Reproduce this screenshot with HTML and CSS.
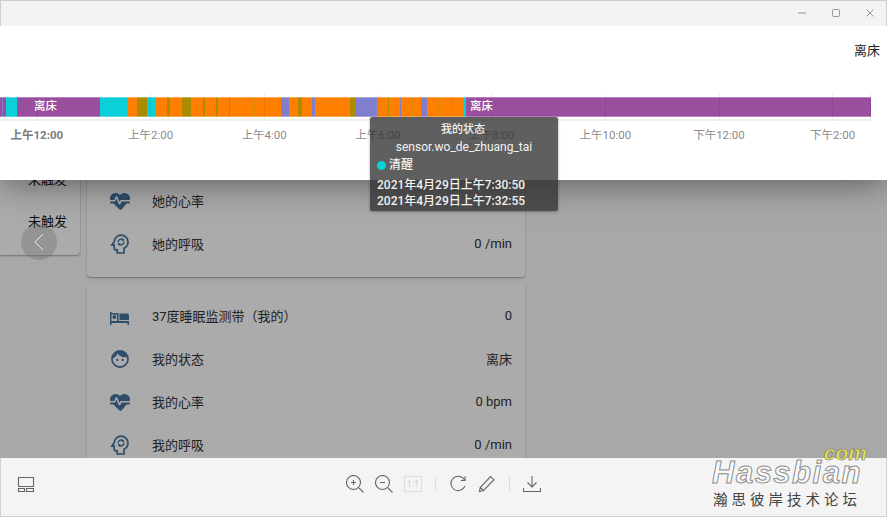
FILE: index.html
```html
<!DOCTYPE html>
<html lang="zh">
<head>
<meta charset="utf-8">
<title>我的状态</title>
<link rel="stylesheet" href="styles.css">
</head>
<body>
<svg class="defs" width="0" height="0">
  <defs>
    <symbol id="i-heart" viewBox="0 0 24 24"><path d="M7.5,4A5.5,5.5 0 0,0 2,9.5C2,10 2.09,10.5 2.22,11H6.3L7.57,7.63C7.87,6.83 9.05,6.75 9.43,7.63L11.5,13L12.09,11.58C12.22,11.25 12.57,11 13,11H21.78C21.91,10.5 22,10 22,9.5A5.5,5.5 0 0,0 16.5,4C14.64,4 13,4.84 12,6.25C11,4.84 9.36,4 7.5,4M3,12.5A1,1 0 0,0 2,13.5A1,1 0 0,0 3,14.5H5.44L11,20C12.5,21.47 12.5,21.47 14,20L18.56,14.5H21A1,1 0 0,0 22,13.5A1,1 0 0,0 21,12.5H13.4L12.47,14.8C12.07,15.81 10.92,15.67 10.55,14.83L8.5,9.5L7.54,11.83C7.39,12.22 7.05,12.5 6.6,12.5H3Z"/></symbol>
    <symbol id="i-head" viewBox="0 0 24 24"><path class="ln" d="M13 3.2C9.4 3.2 6.4 6 6.2 9.7L3.800 13.200H6.200V16C6.200 17 7 17.800 8 17.800H9.200V21H16V16.300C18.300 15.200 20 12.800 20 10C20 6.200 16.900 3.200 13 3.200Z"/><path class="ln thin" d="M10 10.200A3.200 3.200 0 0 1 15.200 7.800M16 9.800A3.200 3.200 0 0 1 10.800 12.200"/><path d="M15.900 6.200V9H13.200ZM10.100 13.800V11H12.800Z"/></symbol>
    <symbol id="i-bed" viewBox="0 0 24 24"><path d="M2 8H3.500V9H10.500V17H21V21H19.500V19H3.500V21H2ZM3.500 10.500V17H9V10.500ZM11.500 9.500H19C20.100 9.500 21 10.400 21 11.500V16H11.500Z"/><circle cx="6.300" cy="13" r="1.900"/></symbol>
    <symbol id="i-face" viewBox="-1.500 -1.500 27 27"><path d="M9,11.75A1.25,1.25 0 0,0 7.75,13A1.25,1.25 0 0,0 9,14.25A1.25,1.25 0 0,0 10.25,13A1.25,1.25 0 0,0 9,11.75M15,11.75A1.25,1.25 0 0,0 13.75,13A1.25,1.25 0 0,0 15,14.25A1.25,1.25 0 0,0 16.25,13A1.25,1.25 0 0,0 15,11.75M12,2A10,10 0 0,0 2,12A10,10 0 0,0 12,22A10,10 0 0,0 22,12A10,10 0 0,0 12,2M12,20C7.59,20 4,16.41 4,12C4,11.71 4,11.42 4.05,11.14C6.41,10.09 8.28,8.16 9.26,5.77C11.07,8.33 14.05,10 17.42,10C18.2,10 18.95,9.91 19.67,9.74C19.88,10.45 20,11.21 20,12C20,16.41 16.41,20 12,20Z"/></symbol>
  </defs>
</svg>

<div class="page">
  <aside class="col-left">
    <section class="card card-left">
      <div class="status-row">未触发</div>
      <div class="status-row">未触发</div>
      <div class="status-row">未触发</div>
    </section>
  </aside>
  <main class="col-main">
    <section class="card card-sensors">
      <div class="row"><svg class="icon"><use href="#i-bed"/></svg><span class="name">37度睡眠监测带（她的）</span><span class="val">0</span></div>
      <div class="row"><svg class="icon"><use href="#i-face"/></svg><span class="name">她的状态</span><span class="val">离床</span></div>
      <div class="row"><svg class="icon"><use href="#i-heart"/></svg><span class="name">她的心率</span><span class="val"></span></div>
      <div class="row"><svg class="icon"><use href="#i-head"/></svg><span class="name">她的呼吸</span><span class="val">0 /min</span></div>
    </section>
    <section class="card card-sensors">
      <div class="row"><svg class="icon"><use href="#i-bed"/></svg><span class="name">37度睡眠监测带（我的）</span><span class="val">0</span></div>
      <div class="row"><svg class="icon"><use href="#i-face"/></svg><span class="name">我的状态</span><span class="val">离床</span></div>
      <div class="row"><svg class="icon"><use href="#i-heart"/></svg><span class="name">我的心率</span><span class="val">0 bpm</span></div>
      <div class="row"><svg class="icon"><use href="#i-head"/></svg><span class="name">我的呼吸</span><span class="val">0 /min</span></div>
    </section>
  </main>
</div>

<div class="scrim"></div>

<button class="nav-prev" aria-label="上一张">
  <svg width="10" height="18" viewBox="0 0 10 18"><path d="M9 1L1 9L9 17"/></svg>
</button>

<section class="viewer">
  <header class="titlebar">
    <svg class="win" viewBox="0 0 10 10"><path d="M1 5H9"/></svg>
    <svg class="win" viewBox="0 0 10 10"><rect x="1.500" y="1.500" width="7" height="7" rx="1.200"/></svg>
    <svg class="win" viewBox="0 0 10 10"><path d="M1.500 1.500L8.500 8.500M8.500 1.500L1.500 8.500"/></svg>
  </header>
  <div class="state-now">离床</div>
  <div class="chart">
    <div class="bar">
      <span class="seg p" style="width:2px"></span>
      <span class="seg b" style="width:1px"></span>
      <span class="seg p" style="width:3px"></span>
      <span class="seg c" style="width:11px"></span>
      <span class="seg p label-a" style="width:83px">离床</span>
      <span class="seg c" style="width:28px"></span>
      <span class="seg o" style="width:9px"></span>
      <span class="seg y" style="width:10px"></span>
      <span class="seg c" style="width:9px"></span>
      <span class="seg o" style="width:11px"></span>
      <span class="seg y" style="width:3px"></span>
      <span class="seg o" style="width:12px"></span>
      <span class="seg y" style="width:9px"></span>
      <span class="seg o" style="width:12px"></span>
      <span class="seg y" style="width:2px"></span>
      <span class="seg o" style="width:11px"></span>
      <span class="seg y" style="width:2px"></span>
      <span class="seg o" style="width:11px"></span>
      <span class="seg y" style="width:1px"></span>
      <span class="seg o" style="width:24px"></span>
      <span class="seg t" style="width:1px"></span>
      <span class="seg o" style="width:14px"></span>
      <span class="seg t" style="width:1px"></span>
      <span class="seg o" style="width:11px"></span>
      <span class="seg b" style="width:8px"></span>
      <span class="seg o" style="width:9px"></span>
      <span class="seg y" style="width:4px"></span>
      <span class="seg o" style="width:10px"></span>
      <span class="seg b" style="width:3px"></span>
      <span class="seg o" style="width:35px"></span>
      <span class="seg y" style="width:6px"></span>
      <span class="seg b" style="width:21px"></span>
      <span class="seg o" style="width:11px"></span>
      <span class="seg y" style="width:1px"></span>
      <span class="seg o" style="width:11px"></span>
      <span class="seg b" style="width:1px"></span>
      <span class="seg o" style="width:11px"></span>
      <span class="seg t" style="width:1px"></span>
      <span class="seg o" style="width:8px"></span>
      <span class="seg b" style="width:6px"></span>
      <span class="seg o" style="width:11px"></span>
      <span class="seg t" style="width:1px"></span>
      <span class="seg o" style="width:12px"></span>
      <span class="seg t" style="width:1px"></span>
      <span class="seg o" style="width:12px"></span>
      <span class="seg c" style="width:2px"></span>
      <span class="seg p label-b" style="width:405px">离床</span>
    </div>
    <div class="axis-line"></div>
    <div class="ticks">
      <span class="tick strong">上午12:00</span>
      <span class="tick">上午2:00</span>
      <span class="tick">上午4:00</span>
      <span class="tick">上午6:00</span>
      <span class="tick">上午8:00</span>
      <span class="tick">上午10:00</span>
      <span class="tick">下午12:00</span>
      <span class="tick">下午2:00</span>
    </div>
    <div class="gridlines">
      <i></i><i></i><i></i><i></i><i></i><i></i><i></i><i></i>
    </div>
    <div class="grid-end"></div>
  </div>
</section>

<div class="tooltip">
  <div class="tt-title">我的状态</div>
  <div class="tt-entity">sensor.wo_de_zhuang_tai</div>
  <div class="tt-state"><span class="dot"></span>清醒</div>
  <div class="tt-time">2021年4月29日上午7:30:50</div>
  <div class="tt-time">2021年4月29日上午7:32:55</div>
</div>

<footer class="toolbar">
  <div class="tb-left">
    <svg class="tool" viewBox="0 0 18 18"><path d="M1.500 2.500H16.500V11.500H1.500ZM1.500 13.500H7.500V16.500H1.500ZM9.500 13.500H16.500V16.500H9.500Z"/></svg>
  </div>
  <div class="tb-center">
    <svg class="tool" viewBox="0 0 18 18"><circle cx="7.500" cy="7.500" r="7"/><path d="M13 13L17.500 17.500M5 7.500H10M7.500 5V10"/></svg>
    <svg class="tool gap" viewBox="0 0 18 18"><circle cx="7.500" cy="7.500" r="7"/><path d="M13 13L17.500 17.500M5 7.500H10"/></svg>
    <span class="one-one">1:1</span>
    <span class="sep"></span>
    <svg class="tool" viewBox="0 0 18 18"><path d="M15.500 5A7.200 7.200 0 1 0 15.900 11M16 1.200V5.500H11.700"/></svg>
    <svg class="tool gap" viewBox="0 0 18 18"><path d="M1.500 16.500L2.200 12.500L12.500 1.500L16 4.700L5.500 15.500ZM2.200 12.500L5.500 15.500"/></svg>
    <span class="sep"></span>
    <svg class="tool" viewBox="0 0 18 18"><path d="M9 1V12M4.500 7.500L9 12L13.500 7.500M.5 13V16.500H17.500V13"/></svg>
  </div>
  <div class="tb-right">
    <div class="logo">
      <span class="logo-com">com</span>
      <span class="logo-main">Hassbian</span>
      <span class="logo-cn">瀚思彼岸技术论坛</span>
    </div>
  </div>
</footer>
</body>
</html>
```

FILE: styles.css
```css
* { box-sizing: border-box; }

html, body {
  margin: 0;
  width: 887px;
  height: 517px;
  overflow: hidden;
}

body {
  position: relative;
  background: #fbfbfb;
  font-family: Roboto, "Noto Sans CJK SC", sans-serif;
  font-size: 13px;
  color: #212121;
}

.defs { position: absolute; }

/* dashboard behind the viewer */
.page {
  display: flex;
  align-items: flex-start;
  gap: 7px;
  width: 887px;
  height: 517px;
}

.col-left { width: 80px; flex: none; }

.col-main {
  width: 438px;
  flex: none;
  display: flex;
  flex-direction: column;
  gap: 7px;
  padding-top: 83px;
}

.card {
  background: #fff;
  border-radius: 4px;
  box-shadow: 0 1px 2px rgba(0, 0, 0, .35);
}

.card-left {
  margin-top: 115px;
  padding: 0 0 14px 28px;
  border-radius: 0 0 4px 0;
}

.status-row {
  height: 42px;
  display: flex;
  align-items: center;
  white-space: nowrap;
  color: #111;
}

.card-sensors { padding: 10px 13px 12px 21px; }

.row {
  height: 43px;
  display: flex;
  align-items: center;
}

.icon {
  width: 24px;
  height: 24px;
  flex: none;
  margin-right: 20px;
  fill: #44739e;
}

.ln {
  fill: none;
  stroke: #44739e;
  stroke-width: 1.700;
}

.ln.thin { stroke-width: 1.500; }

.name { flex: 1; color: #333; }
.val { color: #333; }

/* dim layer */
.scrim {
  position: absolute;
  inset: 0;
  background: rgba(0, 0, 0, .33);
}

.nav-prev {
  position: absolute;
  left: 21px;
  top: 224px;
  width: 36px;
  height: 36px;
  padding: 0;
  border: 0;
  border-radius: 50%;
  background: rgba(110, 110, 110, .35);
  display: flex;
  align-items: center;
  justify-content: center;
}

.nav-prev path {
  fill: none;
  stroke: #e8e8e8;
  stroke-width: 1;
}

/* viewer */
.viewer {
  position: absolute;
  left: 0;
  top: 0;
  width: 887px;
  height: 180px;
  background: #fff;
  box-shadow: 0 0 36px rgba(0, 0, 0, .55);
}

.titlebar {
  height: 26px;
  background: #f3f3f3;
  border-top: 1px solid #cfcfcf;
  border-left: 1px solid #cfcfcf;
  border-right: 1px solid #cfcfcf;
  display: flex;
  justify-content: flex-end;
  align-items: center;
  gap: 24px;
  padding: 0 11px 1px 0;
}

.win {
  width: 10px;
  height: 10px;
  fill: none;
  stroke: #999;
  stroke-width: 1;
}

.state-now {
  height: 71px;
  padding: 16px 7px 0 0;
  text-align: right;
  font-size: 13px;
  line-height: 18px;
  color: #222;
}

.chart { position: relative; width: 871px; }

.bar {
  display: flex;
  height: 20px;
}

.seg {
  flex: none;
  height: 100%;
  color: #fff;
  font-size: 11.500px;
  font-weight: 500;
  line-height: 17px;
  border-top: 1px solid rgba(255, 255, 255, .3);
  border-bottom: 1px solid rgba(255, 255, 255, .3);
  white-space: nowrap;
}

.p { background: #9a4e9e; }
.c { background: #0bd0d9; }
.o { background: #ff7f00; }
.y { background: #ab8c00; }
.b { background: #7f7fcd; }
.t { background: #d98800; }

.label-a { padding-left: 17px; }
.label-b { padding-left: 4px; }

.axis-line {
  height: 2px;
  margin-top: 2px;
  background: #efefef;
}

.ticks {
  display: flex;
  margin-left: -20px;
  width: 910px;
  padding-top: 6px;
}

.tick {
  flex: 0 0 113.700px;
  text-align: center;
  font-size: 11.500px;
  line-height: 17px;
  color: #8a8a8a;
}

.tick.strong { font-weight: 700; color: #7b7b7b; }

.gridlines {
  position: absolute;
  top: -4px;
  left: -20px;
  height: 28px;
  display: flex;
}

.gridlines i {
  flex: 0 0 113.700px;
  position: relative;
}

.gridlines i::before {
  content: "";
  position: absolute;
  left: 56.500px;
  top: 0;
  bottom: 0;
  width: 1px;
  background: rgba(0, 0, 0, .06);
}

.grid-end {
  position: absolute;
  right: 0;
  top: -4px;
  width: 1px;
  height: 28px;
  background: rgba(0, 0, 0, .06);
}

/* tooltip */
.tooltip {
  position: absolute;
  left: 370px;
  top: 117px;
  width: 188px;
  height: 94px;
  padding: 5px 7px 0;
  background: rgba(50, 50, 50, .78);
  border-radius: 2px;
  box-shadow: 0 1px 3px rgba(0, 0, 0, .3);
  color: #f2f2f2;
  font-size: 11px;
  font-weight: 500;
  line-height: 16px;
}

.tt-title { text-align: center; margin-right: 2px; }

.tt-entity {
  text-align: center;
  font-weight: 400;
  font-size: 12px;
  line-height: 19px;
}

.tt-state {
  display: flex;
  align-items: center;
  font-size: 12px;
  line-height: 17px;
}

.dot {
  width: 9px;
  height: 9px;
  margin-right: 3px;
  border-radius: 50%;
  background: #0bd0d9;
}

.tt-time:nth-child(4) { margin-top: 3px; }
.tt-time { white-space: nowrap; font-size: 12px; line-height: 16px; }

/* bottom toolbar */
.toolbar {
  position: absolute;
  left: 0;
  right: 0;
  bottom: 0;
  height: 59px;
  padding-bottom: 8px;
  background: #f4f4f4;
  border-left: 1px solid #cfcfcf;
  border-right: 1px solid #cfcfcf;
  border-bottom: 1px solid #cfcfcf;
  display: grid;
  grid-template-columns: 1fr auto 1fr;
  align-items: center;
}

.tb-left { padding-left: 16px; display: flex; }

.tb-center {
  display: flex;
  align-items: center;
}

.tool {
  width: 18px;
  height: 18px;
  fill: none;
  stroke: #666;
  stroke-width: 1.100;
  flex: none;
}

.tool.gap { margin-left: 11px; }

.one-one {
  width: 18px;
  height: 16px;
  margin-left: 11px;
  border: 1px solid #dcdcdc;
  color: #cfcfcf;
  font-size: 9px;
  line-height: 14px;
  text-align: center;
}

.sep {
  width: 1px;
  height: 15px;
  margin: 0 13px;
  background: #dedede;
}

.tb-right { display: flex; justify-content: flex-end; }

.logo {
  position: relative;
  width: 174px;
  height: 51px;
}

.logo-main {
  position: absolute;
  left: 0;
  top: -2px;
  font: italic 700 31px/34px "Liberation Sans", sans-serif;
  letter-spacing: 1.500px;
  color: #fafafa;
  -webkit-text-stroke: 1px #8c8c8c;
}

.logo-com {
  position: absolute;
  right: 19px;
  top: -16px;
  font: italic 700 21px/22px "Liberation Sans", sans-serif;
  color: #e6e650;
  -webkit-text-stroke: .6px #777;
}

.logo-cn {
  position: absolute;
  left: 1px;
  top: 33px;
  font-size: 14.500px;
  line-height: 20px;
  letter-spacing: 4px;
  white-space: nowrap;
  color: #444;
}
```
